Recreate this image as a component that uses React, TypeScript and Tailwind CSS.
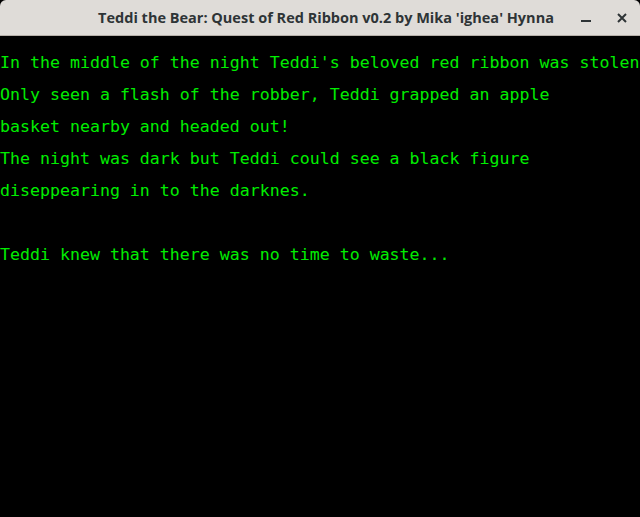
export default function App() {
  const lines = [
    "In the middle of the night Teddi's beloved red ribbon was stolen",
    'Only seen a flash of the robber, Teddi grapped an apple',
    'basket nearby and headed out!',
    'The night was dark but Teddi could see a black figure',
    'disepppearing in to the darknes.'.replace('ppp', 'pp'),
    '',
    'Teddi knew that there was no time to waste...',
  ];

  return (
    <div className="w-[640px] h-[517px] flex flex-col bg-black overflow-hidden">
      <div className="h-[36px] shrink-0 flex items-center bg-[#dfdcd8] border-b border-[#b6b0a9] rounded-t-[6px]">
        <div className="flex-1 text-center pl-[72px] text-[14.5px] font-bold text-[#2e3436] font-['Open_Sans',sans-serif]">
          Teddi the Bear: Quest of Red Ribbon v0.2 by Mika 'ighea' Hynna
        </div>
        <div className="flex items-center gap-[24px] pr-[12px] text-[#2e3436]">
          <svg width="12" height="12" viewBox="0 0 12 12">
            <rect x="1" y="8" width="10" height="2" fill="currentColor" />
          </svg>
          <svg width="12" height="12" viewBox="0 0 12 12">
            <path d="M2 2 L10 10 M10 2 L2 10" stroke="currentColor" strokeWidth="2" />
          </svg>
        </div>
      </div>
      <div className="flex-1 bg-black pt-[11px] font-['DejaVu_Sans_Mono',monospace] text-[16.6px] leading-[32px] text-[#00ee00] whitespace-pre">
        {lines.map((l, i) => (
          <div key={i} className="h-[32px]">
            {l}
          </div>
        ))}
      </div>
    </div>
  );
}
